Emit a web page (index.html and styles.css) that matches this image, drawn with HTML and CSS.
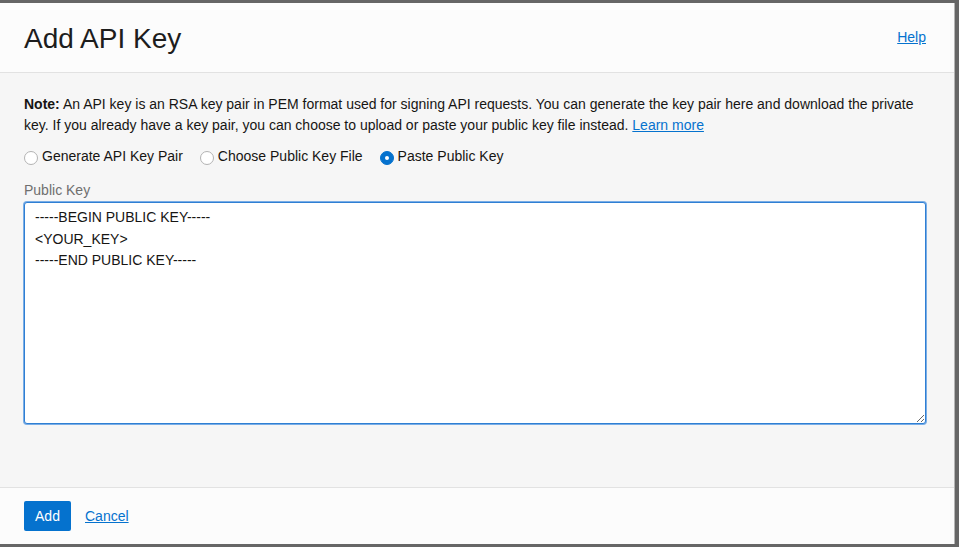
FILE: index.html
```html
<!DOCTYPE html>
<html lang="en">
<head>
<meta charset="utf-8">
<title>Add API Key</title>
<link rel="stylesheet" href="styles.css">
</head>
<body>
<div class="dialog">
  <header class="dlg-header">
    <h1 class="dlg-title">Add API Key</h1>
    <a class="link help" href="#">Help</a>
  </header>
  <main class="dlg-body">
    <p class="note"><strong>Note:</strong> An API key is an RSA key pair in PEM format used for signing API requests. You can generate the key pair here and download the private key. If you already have a key pair, you can choose to upload or paste your public key file instead. <a class="link" href="#">Learn more</a></p>
    <div class="radios">
      <label class="radio"><span class="dot"></span>Generate API Key Pair</label>
      <label class="radio"><span class="dot"></span>Choose Public Key File</label>
      <label class="radio"><span class="dot on"></span>Paste Public Key</label>
    </div>
    <label class="field-label" for="pk">Public Key</label>
    <textarea id="pk" class="keybox">-----BEGIN PUBLIC KEY-----
&lt;YOUR_KEY&gt;
-----END PUBLIC KEY-----</textarea>
  </main>
  <footer class="dlg-footer">
    <button class="btn-primary" type="button">Add</button>
    <a class="link" href="#">Cancel</a>
  </footer>
</div>
</body>
</html>
```
FILE: styles.css
```css
html, body {
  margin: 0;
  padding: 0;
}
body {
  background: #666666;
  font-family: "Liberation Sans", Arial, sans-serif;
  color: #161513;
  height: 547px;
  overflow: hidden;
}
.dialog {
  margin-top: 3px;
  width: 954px;
  height: 541px;
  background: #f6f6f6;
  border-right: 1px solid #b5b5b5;
  display: flex;
  flex-direction: column;
}
.dlg-header {
  height: 69px;
  flex: none;
  background: #fcfcfc;
  border-bottom: 1px solid #e2e2e2;
  display: flex;
  align-items: center;
  justify-content: space-between;
  padding: 0 28px 0 24px;
}
.dlg-title {
  margin: 0;
  font-weight: normal;
  font-size: 28px;
  color: #1d1d1d;
  position: relative;
  top: 1px;
}
.link {
  color: #0572ce;
  text-decoration: underline;
  font-size: 14px;
}
.help {
  font-size: 14px;
  position: relative;
  top: -1px;
}
.dlg-body {
  flex: 1;
  padding: 21px 28px 0 24px;
  font-size: 14px;
  line-height: 21px;
}
.note {
  margin: 0;
  color: #161513;
}
.radios {
  display: flex;
  gap: 17px;
  margin-top: 10px;
}
.radio {
  display: flex;
  align-items: center;
  gap: 4px;
  color: #161513;
}
.dot {
  width: 12px;
  height: 12px;
  border: 1px solid #b3b3b3;
  border-radius: 50%;
  background: #ffffff;
  box-sizing: content-box;
  position: relative;
  top: 1px;
}
.dot.on {
  background: #0572ce;
  border-color: #0572ce;
}
.dot.on::after {
  content: "";
  position: absolute;
  width: 4px;
  height: 4px;
  border-radius: 50%;
  background: #ffffff;
  left: 4px;
  top: 4px;
}
.field-label {
  display: block;
  margin-top: 13px;
  color: #6f6f6f;
}
.keybox {
  display: block;
  box-sizing: border-box;
  width: 902px;
  height: 222px;
  margin-top: 1px;
  padding: 4px 10px;
  border: 1px solid #2f7fd3;
  box-shadow: 0 0 0 1px #79ade6;
  border-radius: 3px;
  background: #ffffff;
  font-family: "Liberation Sans", Arial, sans-serif;
  font-size: 14px;
  line-height: 21.5px;
  color: #161513;
  outline: none;
}
.dlg-footer {
  height: 57px;
  flex: none;
  box-sizing: border-box;
  background: #fcfcfc;
  border-top: 1px solid #e2e2e2;
  display: flex;
  align-items: flex-start;
  gap: 14px;
  padding: 13px 24px 0 24px;
}
.btn-primary {
  height: 30px;
  width: 47px;
  border: none;
  border-radius: 2px;
  background: #0572ce;
  color: #ffffff;
  font-family: "Liberation Sans", Arial, sans-serif;
  font-size: 14px;
  padding: 0;
}
.dlg-footer .link {
  line-height: 30px;
}
```
